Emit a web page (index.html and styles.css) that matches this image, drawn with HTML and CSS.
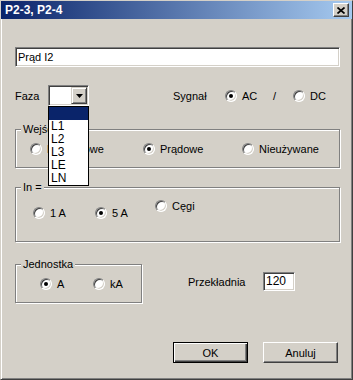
FILE: index.html
```html
<!DOCTYPE html>
<html lang="pl">
<head>
    <meta charset="UTF-8">
    <title>P2-3, P2-4</title>
    <link rel="stylesheet" href="styles.css">
</head>
<body>
<div class="window">
    <div class="titlebar">
        <span class="title">P2-3, P2-4</span>
        <span class="close-btn">
            <svg width="8" height="7" viewBox="0 0 8 7"><path d="M0.5 0.5L7.5 6.5M7.5 0.5L0.5 6.5" stroke="#000" stroke-width="1.7"/></svg>
        </span>
    </div>

    <div class="content">
        <div class="textbox name-box">Prąd I2</div>

        <div class="faza-row">
            <span class="faza-label">Faza</span>
            <div class="combo">
                <div class="combo-field"></div>
                <div class="combo-btn">
                    <svg width="7" height="4" viewBox="0 0 7 4"><path d="M0 0H7L3.5 4Z" fill="#000"/></svg>
                </div>
                <ul class="combo-list">
                    <li class="sel"></li>
                    <li>L1</li>
                    <li>L2</li>
                    <li>L3</li>
                    <li>LE</li>
                    <li>LN</li>
                </ul>
            </div>
            <span class="sygnal-label">Sygnał</span>
            <span class="opt opt-ac"><span class="radio on"></span>AC</span>
            <span class="slash">/</span>
            <span class="opt"><span class="radio"></span>DC</span>
        </div>

        <div class="group wejscie">
            <div class="group-title">Wejście</div>
            <div class="opts">
                <span class="opt w-113"><span class="radio"></span>Napięciowe</span>
                <span class="opt w-99"><span class="radio on"></span>Prądowe</span>
                <span class="opt"><span class="radio"></span>Nieużywane</span>
            </div>
        </div>

        <div class="group in-group">
            <div class="group-title">In =</div>
            <div class="opts in-opts">
                <span class="opt w-62 low"><span class="radio"></span>1 A</span>
                <span class="opt w-60 low"><span class="radio on"></span>5 A</span>
                <span class="opt"><span class="radio"></span>Cęgi</span>
            </div>
        </div>

        <div class="unit-row">
            <div class="group jednostka">
                <div class="group-title">Jednostka</div>
                <div class="opts">
                    <span class="opt w-53"><span class="radio on"></span>A</span>
                    <span class="opt"><span class="radio"></span>kA</span>
                </div>
            </div>
            <div class="ratio">
                <span class="ratio-label">Przekładnia</span>
                <div class="textbox ratio-box">120</div>
            </div>
        </div>

        <div class="buttons">
            <button class="btn default">OK</button>
            <button class="btn">Anuluj</button>
        </div>
    </div>
</div>
</body>
</html>
```

FILE: styles.css
```css
body {
    margin: 0;
    font-family: "Liberation Sans", Arial, sans-serif;
    font-size: 11px;
    color: #000;
    background-color: #d4d0c8;
}

.window {
    width: 353px;
    height: 380px;
    box-sizing: border-box;
    background-color: #d4d0c8;
    border: 1px solid;
    border-color: #d4d0c8 #404040 #404040 #d4d0c8;
    box-shadow: inset 1px 1px #fff, inset -1px -1px #808080;
}

/* title bar */
.titlebar {
    height: 18px;
    display: flex;
    align-items: center;
    justify-content: space-between;
    padding: 0 3px 0 4px;
    background: linear-gradient(to right, #0a246a, #a6caf0);
}

.title {
    color: #fff;
    font-weight: bold;
    font-size: 12px;
}

.close-btn {
    width: 16px;
    height: 14px;
    box-sizing: border-box;
    display: flex;
    align-items: center;
    justify-content: center;
    background-color: #d4d0c8;
    border: 1px solid;
    border-color: #fff #404040 #404040 #fff;
    box-shadow: inset -1px -1px #808080;
}

.content {
    padding: 28px 12px 0 14px;
}

/* sunken edit fields */
.textbox {
    box-sizing: border-box;
    background-color: #fff;
    border: 1px solid;
    border-color: #808080 #fff #fff #808080;
    box-shadow: inset 1px 1px #404040, inset -1px -1px #d4d0c8;
    padding: 0 2px;
}

.name-box {
    height: 20px;
    line-height: 18px;
}

/* Faza / Sygnał row */
.faza-row {
    display: flex;
    align-items: center;
    height: 21px;
    margin-top: 18px;
}

.faza-label {
    width: 33px;
}

.combo {
    position: relative;
    width: 41px;
    height: 21px;
    box-sizing: border-box;
    padding: 1px;
    display: flex;
    border: 1px solid;
    border-color: #808080 #fff #fff #808080;
    box-shadow: inset 1px 1px #404040, inset -1px -1px #d4d0c8;
}

.combo-field {
    flex: 1;
    background-color: #fff;
}

.combo-btn {
    width: 16px;
    box-sizing: border-box;
    display: flex;
    align-items: center;
    justify-content: center;
    background-color: #d4d0c8;
    border: 1px solid;
    border-color: #d4d0c8 #404040 #404040 #d4d0c8;
    box-shadow: inset 1px 1px #fff, inset -1px -1px #808080;
}

.combo-list {
    position: absolute;
    top: 20px;
    left: -1px;
    z-index: 2;
    width: 41px;
    box-sizing: border-box;
    margin: 0;
    padding: 0;
    list-style: none;
    background-color: #fff;
    border: 1px solid #000;
}

.combo-list li {
    height: 13px;
    line-height: 13px;
    padding-left: 2px;
    font-size: 12px;
}

.combo-list li.sel {
    background-color: #0a246a;
}

.sygnal-label {
    margin-left: 84px;
    width: 52px;
}

.opt-ac {
    width: 48px;
}

.slash {
    width: 20px;
}

/* radio buttons */
.opt {
    display: flex;
    align-items: center;
    gap: 5px;
    flex: none;
}

.radio {
    width: 12px;
    height: 12px;
    box-sizing: border-box;
    flex: none;
    display: flex;
    align-items: center;
    justify-content: center;
    border-radius: 50%;
    background-color: #fff;
    border: 1px solid;
    border-color: #808080 #fff #fff #808080;
    box-shadow: inset 1px 1px #404040, inset -1px -1px #d4d0c8;
}

.radio.on::after {
    content: "";
    width: 4px;
    height: 4px;
    border-radius: 50%;
    background-color: #000;
}

.w-113 { width: 113px; }
.w-99 { width: 99px; }
.w-62 { width: 62px; }
.w-60 { width: 60px; }
.w-53 { width: 53px; }

/* group boxes */
.group {
    box-sizing: border-box;
    border: 1px solid #808080;
    box-shadow: inset 1px 1px #fff, 1px 1px #fff;
}

.group-title {
    width: fit-content;
    margin: -7px 0 0 5px;
    padding: 0 2px;
    line-height: 13px;
    background-color: #d4d0c8;
}

.opts {
    display: flex;
    align-items: center;
    height: 13px;
    margin-top: 6px;
}

.wejscie {
    height: 39px;
    margin-top: 23px;
}

.wejscie .opts {
    padding-left: 14px;
}

.in-group {
    height: 55px;
    margin-top: 19px;
}

.in-opts {
    align-items: flex-start;
    padding-left: 17px;
}

.in-opts .low {
    margin-top: 7px;
}

.unit-row {
    display: flex;
    align-items: flex-start;
    margin-top: 22px;
}

.jednostka {
    width: 127px;
    height: 39px;
}

.jednostka .opts {
    padding-left: 24px;
}

.ratio {
    display: flex;
    align-items: center;
    margin: 8px 0 0 46px;
}

.ratio-label {
    width: 75px;
}

.ratio-box {
    width: 32px;
    height: 19px;
    line-height: 17px;
    font-size: 12px;
}

/* OK / Anuluj */
.buttons {
    display: flex;
    justify-content: flex-end;
    gap: 15px;
    margin-top: 39px;
    padding-right: 2px;
}

.btn {
    width: 75px;
    height: 21px;
    box-sizing: border-box;
    padding: 0;
    font: inherit;
    color: #000;
    background-color: #d4d0c8;
    border: 1px solid;
    border-color: #fff #404040 #404040 #fff;
    box-shadow: inset -1px -1px #808080;
}

.btn.default {
    border-color: #000;
    box-shadow: inset 1px 1px #fff, inset -1px -1px #404040, inset -2px -2px #808080;
}
```
